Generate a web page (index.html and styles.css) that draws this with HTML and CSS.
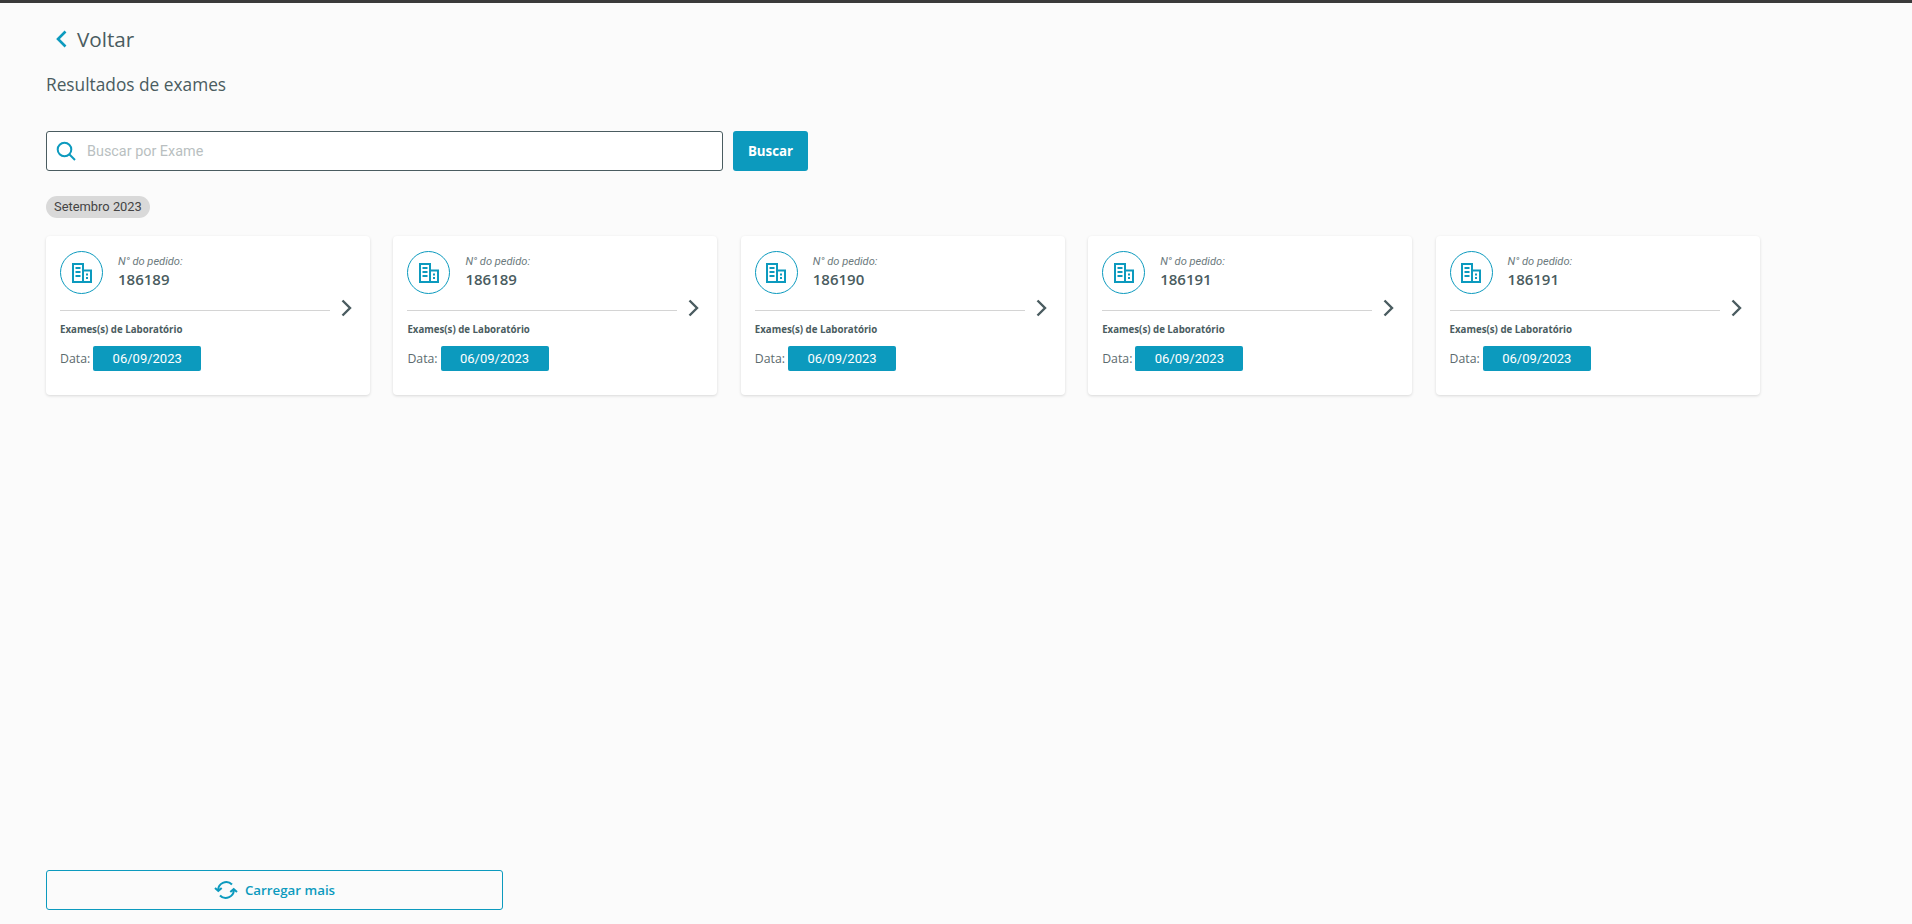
FILE: index.html
```html
<!DOCTYPE html>
<html lang="pt-BR">
<head>
  <meta charset="UTF-8">
  <title>Resultados de exames</title>
  <link rel="stylesheet" href="styles.css">
</head>
<body>

<a class="back" href="#">
  <svg class="back-icon" viewBox="0 0 12 18"><path d="M10.500 1.500 3 9l7.500 7.500"/></svg>
  Voltar
</a>

<h1 class="title">Resultados de exames</h1>

<div class="search">
  <div class="search-box">
    <svg class="search-icon" viewBox="0 0 20 20"><circle cx="8.500" cy="8.500" r="6.800"/><path d="m13.500 13.500 5.500 5.500"/></svg>
    <input class="search-input" type="text" placeholder="Buscar por Exame">
  </div>
  <button class="search-btn">Buscar</button>
</div>

<span class="month">Setembro 2023</span>

<div class="cards">
  <div class="card">
    <div class="card-top">
      <span class="card-circle">
        <svg class="building" viewBox="0 0 20 20"><path d="M1 19V1h10v18M11 7.500h8V19M0 19h20M3.500 5h5M3.500 9h5M3.500 13h5M14 11.500h2M14 15h2"/></svg>
      </span>
      <div>
        <p class="order-label">N° do pedido:</p>
        <p class="order-number">186189</p>
      </div>
    </div>
    <div class="card-mid">
      <hr class="card-line">
      <svg class="card-arrow" viewBox="0 0 12 18"><path d="M1.500 1.500 9 9l-7.500 7.500"/></svg>
    </div>
    <p class="card-type">Exames(s) de Laboratório</p>
    <div class="card-date">Data: <span class="date-badge">06/09/2023</span></div>
  </div>

  <div class="card">
    <div class="card-top">
      <span class="card-circle">
        <svg class="building" viewBox="0 0 20 20"><path d="M1 19V1h10v18M11 7.500h8V19M0 19h20M3.500 5h5M3.500 9h5M3.500 13h5M14 11.500h2M14 15h2"/></svg>
      </span>
      <div>
        <p class="order-label">N° do pedido:</p>
        <p class="order-number">186189</p>
      </div>
    </div>
    <div class="card-mid">
      <hr class="card-line">
      <svg class="card-arrow" viewBox="0 0 12 18"><path d="M1.500 1.500 9 9l-7.500 7.500"/></svg>
    </div>
    <p class="card-type">Exames(s) de Laboratório</p>
    <div class="card-date">Data: <span class="date-badge">06/09/2023</span></div>
  </div>

  <div class="card">
    <div class="card-top">
      <span class="card-circle">
        <svg class="building" viewBox="0 0 20 20"><path d="M1 19V1h10v18M11 7.500h8V19M0 19h20M3.500 5h5M3.500 9h5M3.500 13h5M14 11.500h2M14 15h2"/></svg>
      </span>
      <div>
        <p class="order-label">N° do pedido:</p>
        <p class="order-number">186190</p>
      </div>
    </div>
    <div class="card-mid">
      <hr class="card-line">
      <svg class="card-arrow" viewBox="0 0 12 18"><path d="M1.500 1.500 9 9l-7.500 7.500"/></svg>
    </div>
    <p class="card-type">Exames(s) de Laboratório</p>
    <div class="card-date">Data: <span class="date-badge">06/09/2023</span></div>
  </div>

  <div class="card">
    <div class="card-top">
      <span class="card-circle">
        <svg class="building" viewBox="0 0 20 20"><path d="M1 19V1h10v18M11 7.500h8V19M0 19h20M3.500 5h5M3.500 9h5M3.500 13h5M14 11.500h2M14 15h2"/></svg>
      </span>
      <div>
        <p class="order-label">N° do pedido:</p>
        <p class="order-number">186191</p>
      </div>
    </div>
    <div class="card-mid">
      <hr class="card-line">
      <svg class="card-arrow" viewBox="0 0 12 18"><path d="M1.500 1.500 9 9l-7.500 7.500"/></svg>
    </div>
    <p class="card-type">Exames(s) de Laboratório</p>
    <div class="card-date">Data: <span class="date-badge">06/09/2023</span></div>
  </div>

  <div class="card">
    <div class="card-top">
      <span class="card-circle">
        <svg class="building" viewBox="0 0 20 20"><path d="M1 19V1h10v18M11 7.500h8V19M0 19h20M3.500 5h5M3.500 9h5M3.500 13h5M14 11.500h2M14 15h2"/></svg>
      </span>
      <div>
        <p class="order-label">N° do pedido:</p>
        <p class="order-number">186191</p>
      </div>
    </div>
    <div class="card-mid">
      <hr class="card-line">
      <svg class="card-arrow" viewBox="0 0 12 18"><path d="M1.500 1.500 9 9l-7.500 7.500"/></svg>
    </div>
    <p class="card-type">Exames(s) de Laboratório</p>
    <div class="card-date">Data: <span class="date-badge">06/09/2023</span></div>
  </div>
</div>

<button class="load-more">
  <svg class="load-icon" viewBox="0 0 24 20"><path d="M4.300 11A8 8 0 0 1 18 4.500M19.700 9A8 8 0 0 1 6 15.500M1 8l3.300 3 3.400-3M16.300 12l3.400-3 3.300 3"/></svg>
  Carregar mais
</button>

</body>
</html>
```

FILE: styles.css
```css
* {
  box-sizing: border-box;
}
body {
  margin: 0;
  height: 924px;
  padding: 0 46px 14px;
  display: flex;
  flex-direction: column;
  align-items: flex-start;
  overflow: hidden;
  background: #fbfbfb;
  border-top: 3px solid #3a3a3a;
  font-family: "Open Sans", Lato, sans-serif;
  color: #4a5c60;
}
p {
  margin: 0;
}
.back {
  display: flex;
  align-items: center;
  gap: 10px;
  margin: 21px 0 0 9px;
  height: 30px;
  font-size: 20.700px;
  color: #4a5c60;
  text-decoration: none;
}
.back-icon {
  width: 12px;
  height: 18px;
  fill: none;
  stroke: #0c9abe;
  stroke-width: 2.600;
}
.title {
  margin: 19px 0 0;
  font-size: 17.300px;
  line-height: 24px;
  font-weight: 400;
}
.search {
  display: flex;
  gap: 10px;
  margin-top: 34px;
}
.search-box {
  width: 677px;
  height: 40px;
  display: flex;
  align-items: center;
  gap: 9px;
  padding-left: 9px;
  background: #fff;
  border: 1px solid #4a5c60;
  border-radius: 3px;
}
.search-icon {
  width: 20px;
  height: 20px;
  fill: none;
  stroke: #0c9abe;
  stroke-width: 2;
}
.search-input {
  flex: 1;
  border: 0;
  outline: 0;
  background: none;
  font-family: Roboto, sans-serif;
  font-size: 14.400px;
}
.search-input::placeholder {
  color: #b9bfc1;
}
.search-btn {
  width: 75px;
  height: 40px;
  border: 0;
  border-radius: 3px;
  background: #0c9abe;
  color: #fff;
  font-family: inherit;
  font-size: 13.300px;
  font-weight: 700;
}
.month {
  margin-top: 25px;
  height: 22px;
  padding: 0 8px;
  border-radius: 11px;
  background: #d9d9d9;
  font-family: Roboto, sans-serif;
  font-size: 12.900px;
  line-height: 22px;
  color: #444;
}
.cards {
  display: flex;
  gap: 23.400px;
  margin-top: 18px;
}
.card {
  width: 324px;
  height: 159px;
  padding: 15px 14px 0;
  background: #fff;
  border-radius: 4px;
  box-shadow: 0 1px 3px rgba(0,0,0,0.14);
}
.card-top {
  display: flex;
  gap: 15px;
}
.card-circle {
  width: 43px;
  height: 43px;
  display: flex;
  align-items: center;
  justify-content: center;
  border: 1px solid #0c9abe;
  border-radius: 50%;
}
.building {
  width: 20px;
  height: 20px;
  fill: none;
  stroke: #0c9abe;
  stroke-width: 2;
}
.order-label {
  margin-top: 4px;
  font-family: Roboto, sans-serif;
  font-size: 11.100px;
  line-height: 14px;
  font-style: italic;
  color: #6c7a7d;
}
.order-number {
  font-size: 15px;
  line-height: 20px;
  font-weight: 600;
}
.card-mid {
  display: flex;
  align-items: center;
  gap: 11px;
  margin-top: 6px;
  height: 16px;
}
.card-line {
  width: 270px;
  margin: 5px 0 0;
  border: 0;
  border-top: 1px solid #d4d4d4;
}
.card-arrow {
  width: 12px;
  height: 18px;
  flex: none;
  fill: none;
  stroke: #4a5c60;
  stroke-width: 2.400;
}
.card-type {
  margin-top: 7px;
  font-size: 9.700px;
  line-height: 14px;
  font-weight: 700;
}
.card-date {
  display: flex;
  align-items: center;
  gap: 3px;
  margin-top: 9px;
  font-size: 12.300px;
  color: #5c6b6e;
}
.date-badge {
  width: 108px;
  height: 25px;
  background: #0c9abe;
  border-radius: 2px;
  color: #fff;
  font-family: Roboto, sans-serif;
  font-size: 13px;
  line-height: 25px;
  text-align: center;
}
.load-more {
  margin-top: auto;
  width: 457px;
  height: 40px;
  display: flex;
  align-items: center;
  justify-content: center;
  gap: 7px;
  background: none;
  border: 1px solid #0c9abe;
  border-radius: 3px;
  color: #0c9abe;
  font-family: inherit;
  font-size: 13.300px;
  font-weight: 600;
}
.load-icon {
  width: 24px;
  height: 20px;
  fill: none;
  stroke: #0c9abe;
  stroke-width: 2;
}
```
